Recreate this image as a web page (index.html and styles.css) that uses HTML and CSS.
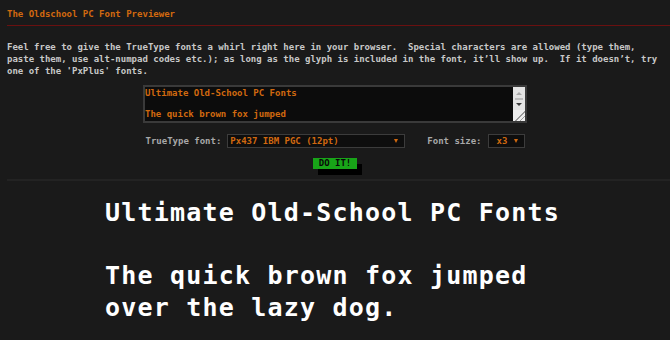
FILE: index.html
```html
<!DOCTYPE html>
<html lang="en">
<head>
<meta charset="utf-8">
<title>The Oldschool PC Font Previewer</title>
<link rel="stylesheet" href="styles.css">
</head>
<body>
<header class="site-header">
  <h1 class="site-title">The Oldschool PC Font Previewer</h1>
</header>
<main class="page">
  <p class="intro">Feel free to give the TrueType fonts a whirl right here in your browser.  Special characters are allowed (type them, paste them, use alt-numpad codes etc.); as long as the glyph is included in the font, it’ll show up.  If it doesn’t, try one of the 'PxPlus' fonts.</p>
  <form class="previewer">
    <div class="editor">
      <textarea class="editor-input" spellcheck="false">Ultimate Old-School PC Fonts

The quick brown fox jumped
over the lazy dog.</textarea>
      <div class="scrollbar">
        <span class="sb-up"></span>
        <span class="sb-thumb"></span>
        <span class="sb-down"></span>
        <span class="sb-grip"></span>
      </div>
    </div>
    <div class="controls">
      <label class="ctl-label">TrueType font:</label>
      <div class="select select-font">
        <span class="select-value">Px437 IBM PGC (12pt)</span>
        <span class="select-arrow"></span>
      </div>
      <label class="ctl-label ctl-label-size">Font size:</label>
      <div class="select select-size">
        <span class="select-value">x3</span>
        <span class="select-arrow"></span>
      </div>
    </div>
    <button type="button" class="go">DO IT!</button>
  </form>
  <div class="divider"></div>
  <div class="preview">Ultimate Old-School PC Fonts<br><br>The quick brown fox jumped<br>over the lazy dog.</div>
</main>
</body>
</html>
```
FILE: styles.css
```css
* { box-sizing: border-box; }

body {
  margin: 0;
  background: #1a1a1a;
  font-family: "DejaVu Sans Mono", "Liberation Mono", monospace;
  font-weight: bold;
  font-size: 9px;
  line-height: 11px;
  color: #c4c4c4;
  overflow: hidden;
}

.site-header {
  margin-left: 7px;
  padding: 9px 0 5px;
  border-bottom: 1px solid #6a1010;
}

.site-title {
  margin: 0;
  font-size: 9px;
  line-height: 11px;
  font-weight: bold;
  color: #d2690f;
}

.page {
  padding: 15px 0 0;
}

.intro {
  margin: 0 0 0 7px;
  width: 120.5ch;
  line-height: 12px;
  white-space: pre-wrap;
  color: #c8c8c8;
}

.previewer {
  margin-top: 8px;
  display: flex;
  flex-direction: column;
  align-items: center;
}

.editor {
  width: 384px;
  height: 38px;
  display: flex;
  border: 2px solid #3a3a3a;
  background: #0c0c0c;
}

.editor-input {
  flex: 1;
  margin: 0;
  padding: 1px 0 0 0;
  border: 0;
  outline: 0;
  resize: none;
  overflow: hidden;
  background: transparent;
  color: #d2690f;
  font: bold 9px/10.5px "DejaVu Sans Mono", "Liberation Mono", monospace;
}

.scrollbar {
  width: 12px;
  display: flex;
  flex-direction: column;
  align-items: center;
  background: #e4e4e4;
}

.sb-up {
  margin-top: 5px;
  width: 0;
  height: 0;
  border-left: 3px solid transparent;
  border-right: 3px solid transparent;
  border-bottom: 3px solid #a8a8a8;
}

.sb-thumb {
  margin-top: 3px;
  width: 8px;
  height: 2px;
  background: #bdbdbd;
}

.sb-down {
  margin-top: 3px;
  width: 0;
  height: 0;
  border-left: 3px solid transparent;
  border-right: 3px solid transparent;
  border-top: 3px solid #3a3a3a;
}

.sb-grip {
  margin-top: auto;
  align-self: stretch;
  height: 11px;
  background:
    linear-gradient(135deg, transparent 55%, #9a9a9a 55%, #9a9a9a 62%, transparent 62%, transparent 75%, #9a9a9a 75%, #9a9a9a 82%, transparent 82%),
    #eeeeee;
}

.controls {
  margin-top: 11px;
  display: flex;
  align-items: center;
  height: 14px;
}

.ctl-label {
  color: #a8a8a8;
  margin-right: 6px;
}

.ctl-label-size {
  margin-left: 22px;
}

.select {
  height: 14px;
  display: flex;
  align-items: center;
  border: 1px solid #3c3c3c;
  background: #0e0e0e;
  color: #d2690f;
}

.select-font {
  width: 178px;
  padding: 0 6px 0 2px;
}

.select-size {
  width: 37px;
  padding: 0 6px 0 8px;
}

.select-value {
  flex: 1;
}

.select-arrow {
  width: 0;
  height: 0;
  border-left: 2px solid transparent;
  border-right: 2px solid transparent;
  border-top: 4px solid #d2690f;
}

.go {
  margin-top: 10px;
  width: 44px;
  height: 11px;
  padding: 0;
  border: 0;
  background: #18a418;
  color: #080808;
  font: bold 9px/11px "DejaVu Sans Mono", "Liberation Mono", monospace;
  box-shadow: 5px 6px 0 #000;
}

.divider {
  margin: 10px 0 0 7px;
  height: 2px;
  background: #232323;
}

.preview {
  margin: 16px 0 0 105px;
  font-size: 25px;
  letter-spacing: 1.2px;
  line-height: 31.5px;
  color: #ffffff;
  white-space: nowrap;
}
```
